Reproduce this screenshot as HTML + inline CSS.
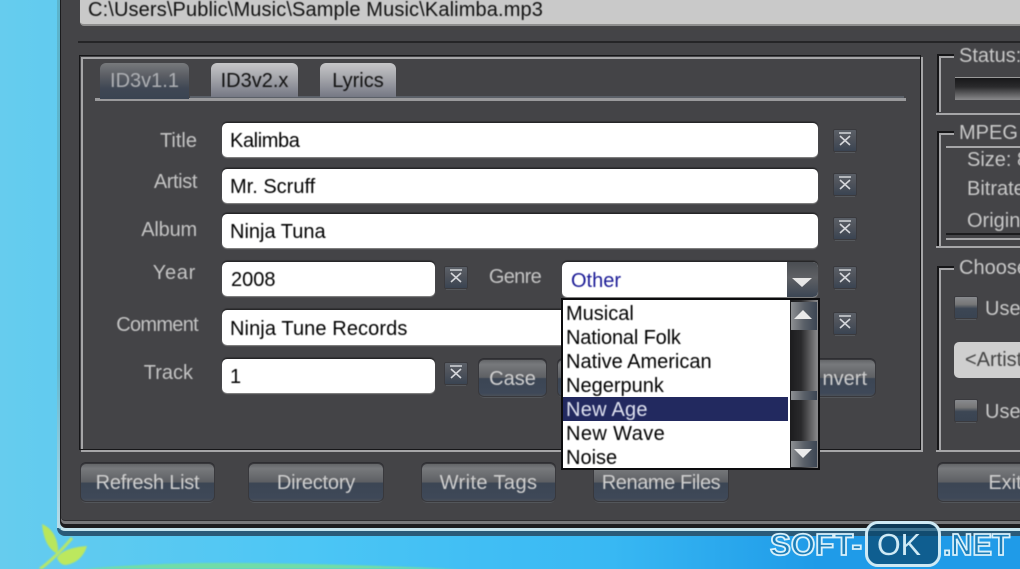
<!DOCTYPE html>
<html><head><meta charset="utf-8">
<style>
html,body{margin:0;padding:0}
#r{position:relative;width:1020px;height:569px;overflow:hidden;background:linear-gradient(90deg,#66ccee 0,#4cc6f5 30%,#38b8f3 60%,#1f9be8 80%,#1f9be8 100%);font-family:"Liberation Sans",sans-serif;}
#r div{position:absolute;box-sizing:border-box}
.t{white-space:nowrap;font-size:20px;line-height:24px;filter:blur(.45px);margin-top:1px}
.l{color:#c4c4c4;text-align:right}
.f{background:#fff;border-radius:5px;box-shadow:0 -1.5px 1px #252527,0 1px 1px #8a8a8a}
.ft{color:#000}
.x{width:22px;height:21px;background:linear-gradient(#5b6068 0,#50545c 40%,#3a4452 100%);box-shadow:0 0 0 1px #3a3a3e,0 3px 0 -1px #55585c;border-radius:1px}
.x svg{position:absolute;left:0;top:0}
.b{background:linear-gradient(#636568 0,#77797c 12%,#5e6064 48%,#3c4654 52%,#3e4858 92%,#4a5058 100%);border-radius:5px;box-shadow:0 0 0 1px #38383c,0 -1px 0 1px #2e2e32,0 2px 0 0 #53565a;color:#cfcfcf;text-align:center;font-size:20px;line-height:38px;white-space:nowrap}
.b span{filter:blur(.45px);display:inline-block}
.tab{border-radius:6px 6px 0 0;text-align:center;font-size:20px;line-height:37px;white-space:nowrap}
.tab span{filter:blur(.45px);display:inline-block}
</style></head><body>
<div id="r">
<!-- hill and leaf -->
<svg style="position:absolute;left:0;top:500px;filter:blur(.7px)" width="500" height="69" viewBox="0 0 500 69">
<path d="M40 69Q55 58 72 38" stroke="#b5e66a" stroke-width="3" fill="none"/>
<path d="M42 24Q56 30 58 48Q58 52 56 53Q44 46 42 24Z" fill="#b9e65c"/>
<path d="M57 58Q62 48 87 46Q82 62 66 65Q60 65 57 58Z" fill="#bce85e"/>
<path d="M82 69Q160 62 250 63Q340 64 460 69Z" fill="#70dca8"/>
</svg>
<!-- window -->
<div style="left:57px;top:-10px;width:980px;height:546px;border-radius:8px;background:#2a5a78"></div>
<div style="left:57px;top:-10px;width:980px;height:541px;border-radius:8px;background:linear-gradient(90deg,#7cc4d8 0,#7cc4d8 4px,#c4e4ee 4px)"></div>
<div style="left:57px;top:-10px;width:4px;height:538px;background:linear-gradient(#5cb4cc 0,#62b8d0 70%,#b8dce8 100%)"></div>
<div style="left:60px;top:-10px;width:980px;height:538px;border-radius:6px;background:#1c1c1e"></div>
<div style="left:61px;top:-10px;width:980px;height:534px;border-radius:4px;background:#77787a"></div>
<div style="left:61px;top:-10px;width:980px;height:531px;border-radius:4px;background:#2c2c2e"></div>
<div style="left:61px;top:-10px;width:980px;height:530px;border-radius:4px;background:#444447"></div>
<!-- path -->
<div style="left:80px;top:-6px;width:960px;height:32px;background:#c9c9c9;border-radius:4px;border-bottom:2px solid #8e8e8e"></div>
<div class="t" style="left:88px;top:-3px;color:#111;font-size:20px;letter-spacing:.13px">C:\Users\Public\Music\Sample Music\Kalimba.mp3</div>
<div style="left:78px;top:41px;width:942px;height:1.5px;background:#252527"></div>
<!-- main panel frame -->
<div style="left:80.5px;top:56.5px;width:842.5px;height:395.5px;border:2px solid #a6a6a8"></div>
<div style="left:79px;top:55px;width:842px;height:395px;border:1.5px solid #161618"></div>
<!-- tabs -->
<div style="left:95px;top:98px;width:811px;height:3px;background:#9a9a9c"></div>
<div style="left:190px;top:96px;width:714px;height:2px;background:#5b6068"></div>
<div class="tab" style="left:100px;top:63px;width:89px;height:36px;color:#aeb0b4;background:linear-gradient(#77797c 0,#5b5e64 35%,#3f4754 70%,#3a4452 100%)"><span>ID3v1.1</span></div>
<div class="tab" style="left:211px;top:63px;width:87px;height:34px;color:#111;background:linear-gradient(#c6c6c8 0,#a8a9ae 40%,#757884 100%)"><span>ID3v2.x</span></div>
<div class="tab" style="left:320px;top:63px;width:76px;height:34px;color:#111;background:linear-gradient(#c6c6c8 0,#a8a9ae 40%,#757884 100%)"><span>Lyrics</span></div>
<!-- labels -->
<div class="t l" style="left:100px;width:97px;top:128px">Title</div>
<div class="t l" style="left:100px;width:97px;top:169px;letter-spacing:-.4px">Artist</div>
<div class="t l" style="left:100px;width:97px;top:217px;letter-spacing:-.2px">Album</div>
<div class="t l" style="left:100px;width:96px;top:260px;letter-spacing:.7px">Year</div>
<div class="t l" style="left:100px;width:98px;top:312px;letter-spacing:-.7px">Comment</div>
<div class="t l" style="left:100px;width:93px;top:360px">Track</div>
<div class="t l" style="left:480px;width:61px;top:264px;letter-spacing:-.7px">Genre</div>
<!-- inputs -->
<div class="f" style="left:222px;top:123px;width:596px;height:34px"></div>
<div class="f" style="left:222px;top:169px;width:596px;height:34px"></div>
<div class="f" style="left:222px;top:214px;width:596px;height:34px"></div>
<div class="f" style="left:222px;top:262px;width:213px;height:34px"></div>
<div class="f" style="left:222px;top:310px;width:596px;height:35px"></div>
<div class="f" style="left:222px;top:359px;width:213px;height:34px"></div>
<div class="t ft" style="left:230px;top:128px;letter-spacing:-.4px">Kalimba</div>
<div class="t ft" style="left:230px;top:174px">Mr. Scruff</div>
<div class="t ft" style="left:230px;top:219px">Ninja Tuna</div>
<div class="t ft" style="left:231px;top:267px">2008</div>
<div class="t ft" style="left:230px;top:316px;letter-spacing:.1px">Ninja Tune Records</div>
<div class="t ft" style="left:230px;top:364px">1</div>
<!-- x buttons -->
<div class="x" style="left:834px;top:130px"><svg width="22" height="21"><path d="M5 3H17M6 15L16 6M6 6L16 15" stroke="#d4d6da" stroke-width="1.6" fill="none"/></svg></div>
<div class="x" style="left:834px;top:174px"><svg width="22" height="21"><path d="M5 3H17M6 15L16 6M6 6L16 15" stroke="#d4d6da" stroke-width="1.6" fill="none"/></svg></div>
<div class="x" style="left:834px;top:218px"><svg width="22" height="21"><path d="M5 3H17M6 15L16 6M6 6L16 15" stroke="#d4d6da" stroke-width="1.6" fill="none"/></svg></div>
<div class="x" style="left:445px;top:267px"><svg width="22" height="21"><path d="M5 3H17M6 15L16 6M6 6L16 15" stroke="#d4d6da" stroke-width="1.6" fill="none"/></svg></div>
<div class="x" style="left:834px;top:267px"><svg width="22" height="21"><path d="M5 3H17M6 15L16 6M6 6L16 15" stroke="#d4d6da" stroke-width="1.6" fill="none"/></svg></div>
<div class="x" style="left:834px;top:313px"><svg width="22" height="21"><path d="M5 3H17M6 15L16 6M6 6L16 15" stroke="#d4d6da" stroke-width="1.6" fill="none"/></svg></div>
<div class="x" style="left:445px;top:363px"><svg width="22" height="21"><path d="M5 3H17M6 15L16 6M6 6L16 15" stroke="#d4d6da" stroke-width="1.6" fill="none"/></svg></div>
<!-- buttons -->
<div class="b" style="left:479px;top:360px;width:67px;height:36px"><span>Case</span></div>
<div class="b" style="left:558px;top:360px;width:317px;height:36px;text-align:right;padding-right:8px"><span>nvert</span></div>
<div class="b" style="left:81px;top:464px;width:133px;height:37px"><span style="letter-spacing:-.25px">Refresh List</span></div>
<div class="b" style="left:249px;top:464px;width:134px;height:37px"><span style="letter-spacing:-.2px">Directory</span></div>
<div class="b" style="left:422px;top:464px;width:133px;height:37px"><span style="letter-spacing:.4px">Write Tags</span></div>
<div class="b" style="left:594px;top:464px;width:134px;height:37px"><span style="letter-spacing:-.4px">Rename Files</span></div>
<div class="b" style="left:938px;top:464px;width:134px;height:37px"><span>Exit</span></div>
<!-- combo -->
<div class="f" style="left:562px;top:262px;width:256px;height:35px"></div>
<div class="t" style="left:571px;top:268px;color:#1a1a96">Other</div>
<div style="left:787px;top:262px;width:31px;height:35px;border-radius:0 5px 5px 0;background:linear-gradient(#4a4d52 0,#5e6064 45%,#3c4654 100%)"></div>
<div style="left:792px;top:278px;width:0;height:0;border-left:10px solid transparent;border-right:10px solid transparent;border-top:9px solid #e6e6e6"></div>
<!-- dropdown -->
<div style="left:561px;top:298px;width:259px;height:172px;background:#fff;border:2px solid #0c0c0e"></div>
<div style="left:563px;top:397px;width:225px;height:24px;background:#22295f"></div>
<div class="t" style="left:566px;top:301px;color:#000">Musical</div>
<div class="t" style="left:566px;top:325px;color:#000;letter-spacing:-.15px">National Folk</div>
<div class="t" style="left:566px;top:349px;color:#000">Native American</div>
<div class="t" style="left:566px;top:373px;color:#000">Negerpunk</div>
<div class="t" style="left:566px;top:397px;color:#dfe2f0;letter-spacing:.25px">New Age</div>
<div class="t" style="left:566px;top:421px;color:#000;letter-spacing:.4px">New Wave</div>
<div class="t" style="left:566px;top:445px;color:#000">Noise</div>
<!-- scrollbar -->
<div style="left:790px;top:300px;width:28px;height:168px;background:linear-gradient(90deg,#1c1c1e 0,#2a2a2c 40%,#8a8a8c 100%)"></div>
<div style="left:791px;top:302px;width:26px;height:28px;background:linear-gradient(90deg,#8d8f92 0,#5a6068 50%,#3c4654 100%)"></div>
<div style="left:794px;top:310px;border-left:9px solid transparent;border-right:9px solid transparent;border-bottom:9px solid #eaeaea"></div>
<div style="left:791px;top:391px;width:26px;height:9px;background:linear-gradient(90deg,#8d8f92 0,#5a6068 50%,#3c4654 100%)"></div>
<div style="left:791px;top:441px;width:26px;height:26px;background:linear-gradient(90deg,#8d8f92 0,#5a6068 50%,#3c4654 100%)"></div>
<div style="left:794px;top:449px;border-left:9px solid transparent;border-right:9px solid transparent;border-top:9px solid #eaeaea"></div>
<!-- right groups -->
<div style="left:938px;top:54px;width:16px;height:1.5px;background:#161618"></div>
<div style="left:937px;top:54px;width:1.5px;height:58px;background:#161618"></div>
<div style="left:939px;top:56px;width:15px;height:2px;background:#a6a6a8"></div>
<div style="left:938.5px;top:56px;width:2px;height:56px;background:#a6a6a8"></div>
<div style="left:936px;top:113px;width:84px;height:2px;background:#a6a6a8"></div>
<div class="t" style="left:959px;top:43px;color:#c8c8c8">Status:</div>
<div style="left:955px;top:77px;width:70px;height:23px;background:linear-gradient(#18181a 0,#2a2a2c 40%,#8a8a8c 100%);border-top:1px solid #999"></div>
<div style="left:938px;top:131px;width:16px;height:1.5px;background:#161618"></div>
<div style="left:937px;top:131px;width:1.5px;height:116px;background:#161618"></div>
<div style="left:939px;top:133px;width:15px;height:2px;background:#a6a6a8"></div>
<div style="left:938.5px;top:133px;width:2px;height:113px;background:#a6a6a8"></div>
<div style="left:936px;top:246px;width:84px;height:2px;background:#a6a6a8"></div>
<div class="t" style="left:959px;top:120px;color:#c8c8c8">MPEG</div>
<div style="left:946px;top:146px;width:74px;height:1.5px;background:#a6a6a8"></div>
<div class="t" style="left:967px;top:147px;color:#c8c8c8">Size: 8</div>
<div class="t" style="left:967px;top:176px;color:#c8c8c8">Bitrate</div>
<div class="t" style="left:967px;top:208px;color:#c8c8c8">Original</div>
<div style="left:946px;top:233px;width:74px;height:1.5px;background:#1c1c1e"></div>
<div style="left:946px;top:238px;width:74px;height:1.5px;background:#a6a6a8"></div>
<div style="left:938px;top:266px;width:16px;height:1.5px;background:#161618"></div>
<div style="left:937px;top:266px;width:1.5px;height:186px;background:#161618"></div>
<div style="left:939px;top:268px;width:15px;height:2px;background:#a6a6a8"></div>
<div style="left:938.5px;top:268px;width:2px;height:184px;background:#a6a6a8"></div>
<div style="left:936px;top:450px;width:84px;height:2px;background:#a6a6a8"></div>
<div class="t" style="left:959px;top:255px;color:#c8c8c8">Choose</div>
<div class="x" style="left:955px;top:297px;background:linear-gradient(#888a8e 0,#777 35%,#3c4654 55%,#3a4452 100%)"></div>
<div class="t" style="left:985px;top:296px;color:#c8c8c8">Use</div>
<div style="left:954px;top:342px;width:90px;height:36px;background:#cfcfcf;border-radius:5px"></div>
<div class="t" style="left:965px;top:347px;color:#444">&lt;Artist</div>
<div class="x" style="left:955px;top:400px;background:linear-gradient(#888a8e 0,#777 35%,#3c4654 55%,#3a4452 100%)"></div>
<div class="t" style="left:985px;top:399px;color:#c8c8c8">Use</div>
<!-- watermark -->
<div style="left:865px;top:521px;width:76px;height:46px;border:3px solid #cfeaf5;border-radius:13px;background:rgba(10,70,110,.72)"></div>
<svg style="position:absolute;left:0;top:0" width="1020" height="569">
<g font-family="Liberation Sans" font-size="31">
<text x="770" y="555" fill="#1a7db8" stroke="#d8f0fa" stroke-width="1.8" font-weight="bold" textLength="92" lengthAdjust="spacingAndGlyphs">SOFT-</text>
<text x="877" y="555" fill="#cfeaf5" textLength="44" lengthAdjust="spacingAndGlyphs">OK</text>
<text x="943" y="555" fill="#1a7db8" stroke="#d8f0fa" stroke-width="1.8" font-weight="bold" textLength="67" lengthAdjust="spacingAndGlyphs">.NET</text>
</g></svg>
</div>
</body></html>
